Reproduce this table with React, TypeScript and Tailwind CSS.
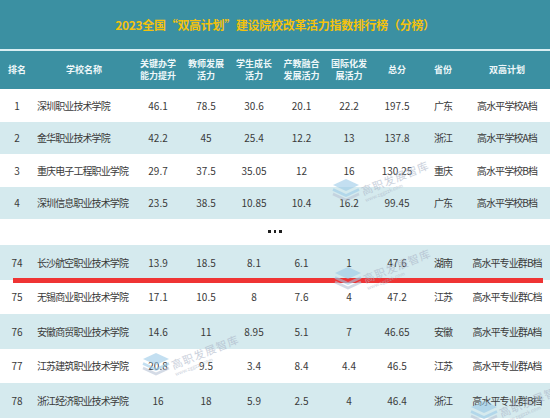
import React from 'react'

type Row = {
  rank: string
  name: string
  v: string[]
  total: string
  prov: string
  plan: string
}

const topRows: Row[] = [
  { rank: '1', name: '深圳职业技术学院', v: ['46.1', '78.5', '30.6', '20.1', '22.2'], total: '197.5', prov: '广东', plan: '高水平学校A档' },
  { rank: '2', name: '金华职业技术学院', v: ['42.2', '45', '25.4', '12.2', '13'], total: '137.8', prov: '浙江', plan: '高水平学校A档' },
  { rank: '3', name: '重庆电子工程职业学院', v: ['29.7', '37.5', '35.05', '12', '16'], total: '130.25', prov: '重庆', plan: '高水平学校B档' },
  { rank: '4', name: '深圳信息职业技术学院', v: ['23.5', '38.5', '10.85', '10.4', '16.2'], total: '99.45', prov: '广东', plan: '高水平学校B档' },
]

const bottomRows: Row[] = [
  { rank: '74', name: '长沙航空职业技术学院', v: ['13.9', '18.5', '8.1', '6.1', '1'], total: '47.6', prov: '湖南', plan: '高水平专业群B档' },
  { rank: '75', name: '无锡商业职业技术学院', v: ['17.1', '10.5', '8', '7.6', '4'], total: '47.2', prov: '江苏', plan: '高水平专业群C档' },
  { rank: '76', name: '安徽商贸职业技术学院', v: ['14.6', '11', '8.95', '5.1', '7'], total: '46.65', prov: '安徽', plan: '高水平专业群A档' },
  { rank: '77', name: '江苏建筑职业技术学院', v: ['20.8', '9.5', '3.4', '8.4', '4.4'], total: '46.5', prov: '江苏', plan: '高水平专业群A档' },
  { rank: '78', name: '浙江经济职业技术学院', v: ['16', '18', '5.9', '2.5', '4'], total: '46.4', prov: '浙江', plan: '高水平专业群B档' },
]

const headers: string[][] = [
  ['排名'],
  ['学校名称'],
  ['关键办学', '能力提升'],
  ['教师发展', '活力'],
  ['学生成长', '活力'],
  ['产教融合', '发展活力'],
  ['国际化发', '展活力'],
  ['总分'],
  ['省份'],
  ['双高计划'],
]

const cols = 'grid grid-cols-[34px_100px_48px_48px_48px_47px_48px_48px_44px_84px]'

function DataRow({ row, striped, tall }: { row: Row; striped: boolean; tall: boolean }) {
  return (
    <div
      className={`${cols} items-center text-[10px] text-[#3a3a3a] ${
        tall ? 'h-[34.5px]' : 'h-[32.5px]'
      } ${striped ? 'bg-[#d5eaee]' : 'bg-white'}`}
    >
      <div className="text-center">{row.rank}</div>
      <div className="pl-[3px] tracking-[-0.9px] whitespace-nowrap">{row.name}</div>
      {row.v.map((x, i) => (
        <div key={i} className="text-center">
          {x}
        </div>
      ))}
      <div className="text-center">{row.total}</div>
      <div className="text-center tracking-[-0.9px]">{row.prov}</div>
      <div className="text-center tracking-[-0.9px] whitespace-nowrap">{row.plan}</div>
    </div>
  )
}

function Logo() {
  return (
    <svg width="28" height="24" viewBox="0 0 28 24">
      <polygon points="14,1 27,7 14,13 1,7" fill="#9ccbe8" />
      <polyline points="1,11.5 14,17.5 27,11.5" fill="none" stroke="#9ccbe8" strokeWidth="2.5" />
      <polyline points="1,16 14,22 27,16" fill="none" stroke="#b9c4d6" strokeWidth="2.5" />
    </svg>
  )
}

function Mark({ className }: { className: string }) {
  return (
    <div className={`pointer-events-none absolute flex items-end gap-[6px] opacity-60 ${className}`}>
      <Logo />
      <div className="-rotate-[22deg] origin-bottom-left leading-none text-[#a9b3c6]">
        <div className="text-[11px] tracking-[1px] whitespace-nowrap">高职发展智库</div>
        <div className="mt-[1px] text-[5px] whitespace-nowrap">www.zggzzk.com</div>
      </div>
    </div>
  )
}

export default function App() {
  return (
    <div
      className="relative h-[420px] w-[550px] overflow-hidden bg-white"
      style={{ fontFamily: '"Noto Sans CJK SC", "Noto Sans", sans-serif' }}
    >
      {/* title band */}
      <div className="flex h-[49px] items-center justify-center bg-[#3b90a2] pt-[1px]">
        <span className="text-[12px] font-bold tracking-[-0.3px] text-[#f4c20d]">
          2023全国“双高计划”建设院校改革活力指数排行榜（分榜）
        </span>
      </div>
      <div className="h-[2px] bg-[#d9eef2]" />

      {/* column headers */}
      <div className={`${cols} h-[38px] items-center bg-[#3b90a2] text-[9px] font-bold leading-[12px] text-[#eef7f9]`}>
        {headers.map((h, i) => (
          <div key={i} className="text-center whitespace-nowrap">
            {h.map((line) => (
              <div key={line}>{line}</div>
            ))}
          </div>
        ))}
      </div>

      {topRows.map((r, i) => (
        <DataRow key={r.rank} row={r} striped={i % 2 === 1} tall={false} />
      ))}

      {/* gap */}
      <div className="flex h-[26px] items-start justify-center pl-[0px] pt-[11px]">
        <div className="flex gap-[3px] pl-[0px]">
          <span className="h-[2.5px] w-[2.5px] bg-[#1f1f1f]" />
          <span className="h-[2.5px] w-[2.5px] bg-[#1f1f1f]" />
          <span className="h-[2.5px] w-[2.5px] bg-[#1f1f1f]" />
        </div>
      </div>

      {bottomRows.map((r, i) => (
        <DataRow key={r.rank} row={r} striped={i % 2 === 0} tall />
      ))}

      {/* red highlight line */}
      <div className="absolute left-[13px] top-[278px] h-[5px] w-[530px] bg-[#ef3434]" />

      {/* watermarks */}
      <Mark className="left-[332px] top-[178px]" />
      <Mark className="left-[334px] top-[266px]" />
      <Mark className="left-[142px] top-[352px]" />
      <Mark className="left-[470px] top-[400px]" />
    </div>
  )
}
